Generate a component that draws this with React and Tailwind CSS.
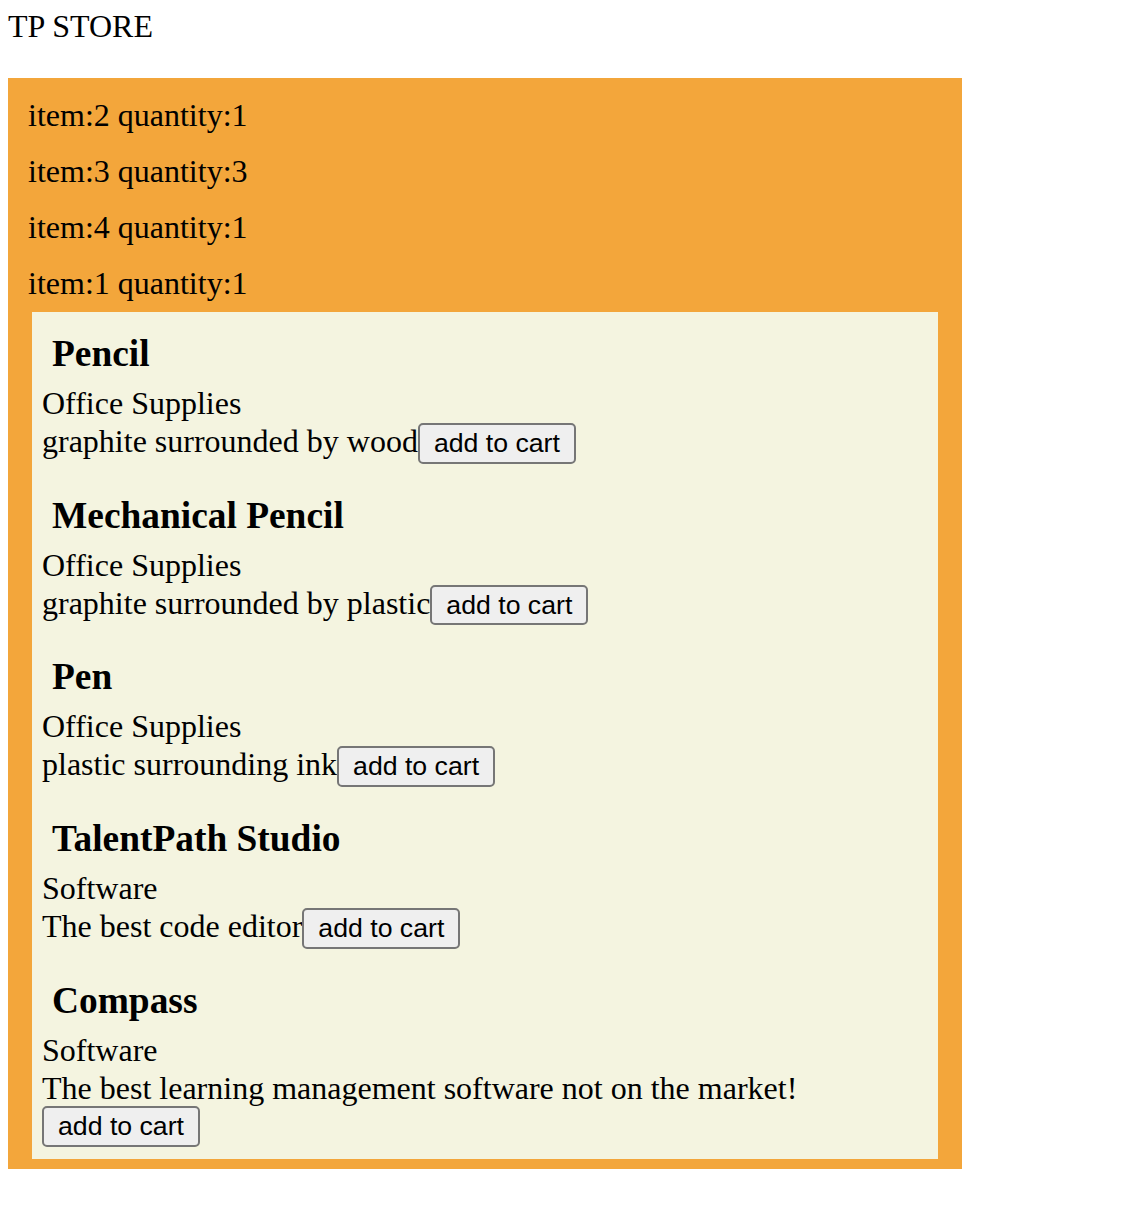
import React from 'react'

const cart = [
  { id: 2, qty: 1 },
  { id: 3, qty: 3 },
  { id: 4, qty: 1 },
  { id: 1, qty: 1 },
]

const products = [
  { name: 'Pencil', category: 'Office Supplies', description: 'graphite surrounded by wood' },
  { name: 'Mechanical Pencil', category: 'Office Supplies', description: 'graphite surrounded by plastic' },
  { name: 'Pen', category: 'Office Supplies', description: 'plastic surrounding ink' },
  { name: 'TalentPath Studio', category: 'Software', description: 'The best code editor' },
  { name: 'Compass', category: 'Software', description: 'The best learning management software not on the market!' },
]

function Product({ product }) {
  return (
    <div>
      <h3 className="pl-[10px] text-[37.4px] font-bold leading-[43px]">{product.name}</h3>
      <div className="mt-[10px] leading-[36px]">{product.category}</div>
      <div className="pt-[2px] leading-[36px]">
        {product.description}
        <button className="inline-block align-baseline rounded-[5px] border-2 border-[#767676] bg-[#efefef] px-[14px] py-[3px] font-['Liberation_Sans',Arial,sans-serif] text-[26.67px] leading-[30.7px] text-black">
          add to cart
        </button>
      </div>
    </div>
  )
}

export default function App() {
  return (
    <div className="min-h-screen bg-white font-['Liberation_Serif','Times_New_Roman',serif] text-[32px] text-black">
      <div className="pl-2 pt-2 leading-[37px]">TP STORE</div>

      {/* cart + product list */}
      <div className="ml-2 mt-[33px] w-[954px] bg-[#f3a63b] px-5 pt-[19px] pb-[10px]">
        <div className="flex flex-col gap-[19px] leading-[37px]">
          {cart.map(c => (
            <div key={c.id}>item:{c.id} quantity:{c.qty}</div>
          ))}
        </div>

        <div className="mx-1 mt-[10px] flex flex-col gap-[30px] bg-[#f4f4e0] px-[10px] pt-[20px] pb-[12px]">
          {products.map(p => (
            <Product key={p.name} product={p} />
          ))}
        </div>
      </div>
    </div>
  )
}
